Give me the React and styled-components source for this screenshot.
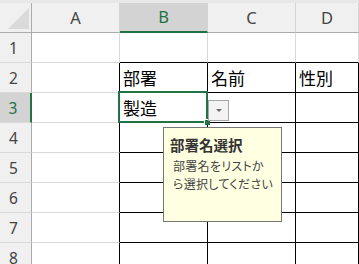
import React from "react";
import styled, { createGlobalStyle } from "styled-components";

const GREEN = "#217346";
const GRID = "#dadada";
const INK = "#000";

const GlobalStyle = createGlobalStyle`
  html, body {
    margin: 0;
    padding: 0;
    background: #fff;
    overflow: hidden;
  }
  body {
    font-family: "Noto Sans CJK JP", "Noto Sans", sans-serif;
  }
`;

const Sheet = styled.div`
  position: relative;
  width: 359px;
  height: 264px;
  overflow: hidden;
  background: #fff;
`;

const TopStrip = styled.div`
  height: 3px;
  background: #e8e8e8;
`;

const Row = styled.div`
  display: grid;
  grid-template-columns: 32px 88px 88px 88px 1fr;
  height: 30px;
`;

const Corner = styled.div`
  position: relative;
  background: #f0f0f0;
  border-right: 1px solid #ababab;
  border-bottom: 1px solid #ababab;

  &::after {
    content: "";
    position: absolute;
    right: 2px;
    bottom: 3px;
    width: 21px;
    height: 21px;
    background: #dadada;
    clip-path: polygon(100% 0, 100% 100%, 0 100%);
  }
`;

const ColHeader = styled.div`
  display: flex;
  align-items: center;
  justify-content: center;
  background: ${(p) => (p.$active ? "#d3d3d3" : "#f0f0f0")};
  border-right: 1px solid #d4d4d4;
  border-bottom: ${(p) => (p.$active ? `2px solid ${GREEN}` : "1px solid #ababab")};
  color: ${(p) => (p.$active ? GREEN : "#444")};
  font-family: "Noto Sans", "Liberation Sans", sans-serif;
  font-size: 16.5px;
  padding-bottom: 1px;
`;

const RowHeader = styled.div`
  display: flex;
  align-items: center;
  justify-content: center;
  padding-right: 4px;
  background: ${(p) => (p.$active ? "#d3d3d3" : "#f0f0f0")};
  border-right: ${(p) => (p.$active ? `2px solid ${GREEN}` : "1px solid #ababab")};
  border-bottom: 1px solid ${GRID};
  color: ${(p) => (p.$active ? GREEN : "#444")};
  font-family: "Noto Sans", "Liberation Sans", sans-serif;
  font-size: 15.5px;
`;

const Cell = styled.div`
  position: relative;
  display: flex;
  align-items: flex-end;
  padding: 0 2px 3px 3px;
  border-right: 1px solid ${(p) => (p.$rightInk ? INK : GRID)};
  border-bottom: 1px solid ${(p) => (p.$bottomInk ? INK : GRID)};
  font-size: 17px;
  line-height: 22px;
  color: #000;
  white-space: nowrap;
`;

const Selection = styled.div`
  position: absolute;
  left: -2px;
  top: -2px;
  right: -1px;
  bottom: -1px;
  border: 2px solid ${GREEN};
  pointer-events: none;
  z-index: 2;
`;

const FillHandle = styled.span`
  position: absolute;
  right: -4px;
  bottom: -4px;
  width: 5px;
  height: 5px;
  background: ${GREEN};
  border-left: 1px solid #fff;
  border-top: 1px solid #fff;
`;

const DropButton = styled.div`
  position: absolute;
  left: 88px;
  top: 7px;
  width: 21px;
  height: 21px;
  box-sizing: border-box;
  display: flex;
  align-items: center;
  justify-content: center;
  background: #f3f3f3;
  border: 1px solid #a6a6a6;
  z-index: 3;

  &::after {
    content: "";
    width: 0;
    height: 0;
    border-left: 3px solid transparent;
    border-right: 3px solid transparent;
    border-top: 3px solid #6a6a6a;
  }
`;

const Tooltip = styled.div`
  position: absolute;
  left: 163px;
  top: 127px;
  width: 119px;
  height: 95px;
  box-sizing: border-box;
  display: flex;
  flex-direction: column;
  gap: 2px;
  padding: 7px 4px 0 6px;
  background: #ffffe1;
  border: 1px solid #767676;
  z-index: 4;
`;

const TipTitle = styled.div`
  font-size: 14.5px;
  font-weight: 700;
  line-height: 20px;
  color: #333;
`;

const TipBody = styled.div`
  padding-left: 3px;
  font-size: 12px;
  line-height: 17.5px;
  color: #444;
  white-space: nowrap;
  font-feature-settings: "palt";
  letter-spacing: 0.3px;
`;

const columns = ["A", "B", "C", "D"];

const values = {
  2: { B: "部署", C: "名前", D: "性別" },
  3: { B: "製造" },
};

const rows = [1, 2, 3, 4, 5, 6, 7, 8];

export default function App() {
  return (
    <>
      <GlobalStyle />
      <Sheet>
        <TopStrip />
        <Row>
          <Corner />
          {columns.map((c) => (
            <ColHeader key={c} $active={c === "B"}>
              {c}
            </ColHeader>
          ))}
        </Row>
        {rows.map((r) => (
          <Row key={r}>
            <RowHeader $active={r === 3}>{r}</RowHeader>
            {columns.map((c) => {
              const selected = r === 3 && c === "B";
              return (
                <Cell key={c} $rightInk={r >= 2} $bottomInk={c !== "A"}>
                  {values[r]?.[c]}
                  {selected && (
                    <>
                      <Selection>
                        <FillHandle />
                      </Selection>
                      <DropButton />
                    </>
                  )}
                </Cell>
              );
            })}
          </Row>
        ))}
        <Tooltip>
          <TipTitle>部署名選択</TipTitle>
          <TipBody>
            部署名をリストか
            <br />
            ら選択してください
          </TipBody>
        </Tooltip>
      </Sheet>
    </>
  );
}
